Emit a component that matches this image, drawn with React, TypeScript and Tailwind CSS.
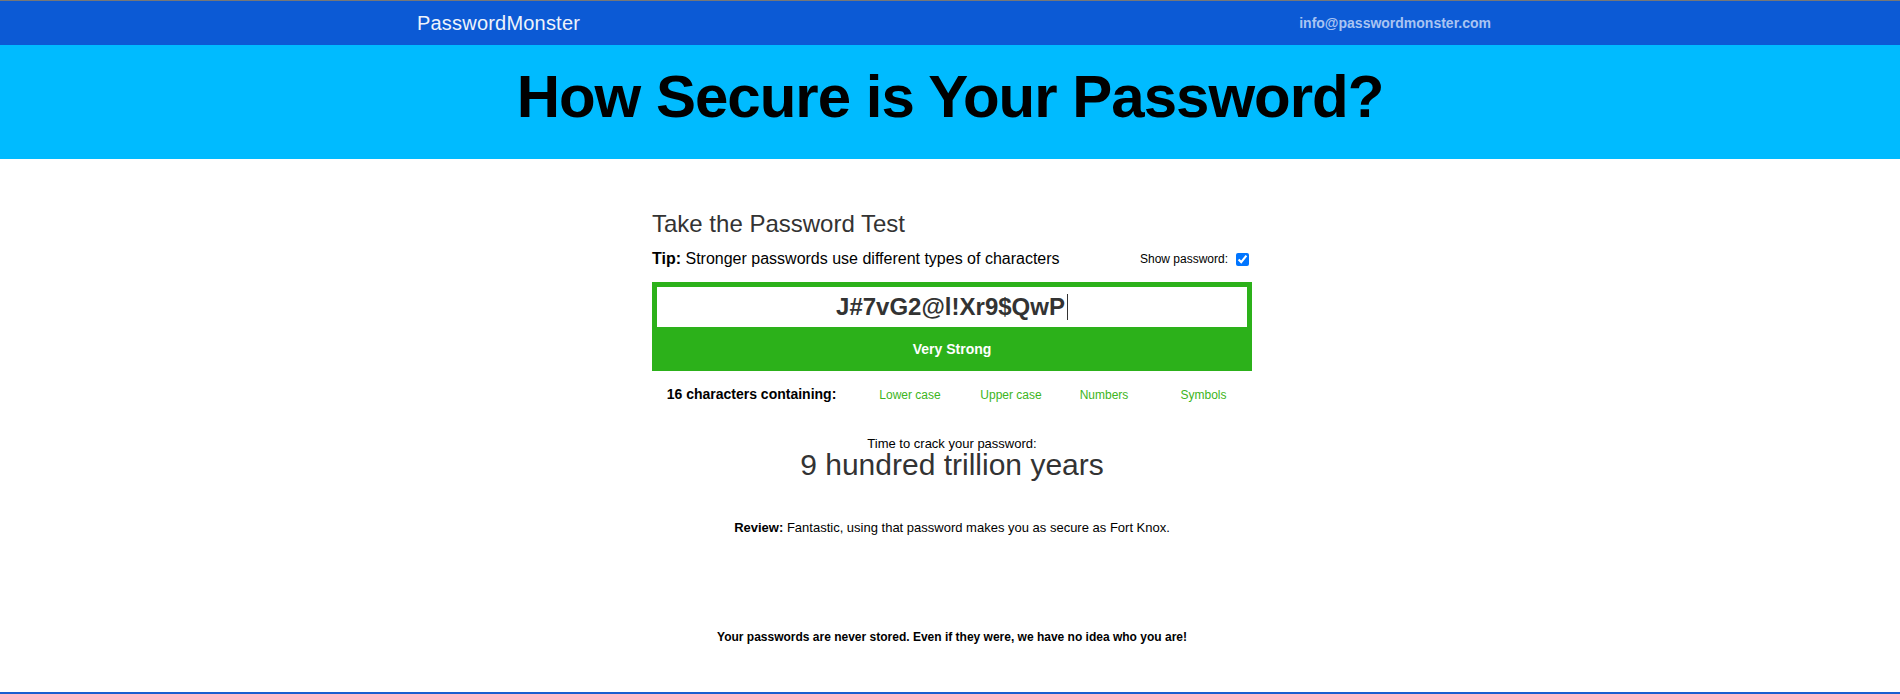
import React from "react";

const features = ["Lower case", "Upper case", "Numbers", "Symbols"];

const Header = () => (
  <header className="border-t border-[#777777] bg-[#0c5ad5]">
    <div className="mx-auto flex h-[44px] w-[1082px] items-center justify-between">
      <span className="ml-[8px] text-[20px] leading-none tracking-[0.2px] text-[#eef3fb]">PasswordMonster</span>
      <a href="#" className="text-[14px] font-bold text-[#a9c4f2]">
        info@passwordmonster.com
      </a>
    </div>
  </header>
);

const PasswordBox = ({ value }: { value: string }) => (
  <div className="mt-[13px] border-[5px] border-b-0 border-[#2cb11a] bg-[#2cb11a]">
    <div className="flex h-[40px] items-center justify-center bg-white">
      <span className="text-[24px] font-bold text-[#333333]">{value}</span>
      <span className="ml-[2px] h-[26px] w-px bg-[#333333]" />
    </div>
    <div className="flex h-[44px] items-center justify-center text-[14px] font-bold text-white">
      Very Strong
    </div>
  </div>
);

export default function App() {
  const password = "J#7vG2@l!Xr9$QwP";

  return (
    <div className="min-h-screen bg-white font-['Liberation_Sans',Arial,sans-serif] text-black">
      <Header />

      <section className="bg-[#00bbff] pt-[22px] pb-[32px] text-center">
        <h1 className="text-[60px] leading-none font-bold tracking-[-1px] text-black">
          How Secure is Your Password?
        </h1>
      </section>

      <main className="flex justify-center pl-[4px] pt-[51px]">
        <div className="w-[600px]">
          <h2 className="text-[24px] leading-[28px] text-[#333333]">Take the Password Test</h2>

          <div className="mt-[11px] flex h-[20px] items-center justify-between">
            <p className="text-[16px] leading-[20px]">
              <b>Tip:</b> Stronger passwords use different types of characters
            </p>
            <label className="flex items-center text-[12px]">
              Show password:
              <input
                type="checkbox"
                checked
                readOnly
                className="mr-[3px] ml-[8px] h-[13px] w-[13px] accent-[#0075ff]"
              />
            </label>
          </div>

          <PasswordBox value={password} />

          <div className="mt-[13px] grid h-[20px] grid-cols-[199px_118px_84px_102px_97px] items-center text-center">
            <span className="text-[14px] font-bold">16 characters containing:</span>
            {features.map((f) => (
              <span key={f} className="text-[12px] text-[#3cb521]">
                {f}
              </span>
            ))}
          </div>

          <div className="mt-[32px] text-center">
            <p className="text-[13px] leading-[15px]">Time to crack your password:</p>
            <p className="text-[30px] leading-[28px] text-[#333333]">9 hundred trillion years</p>
          </div>

          <p className="mt-[41px] text-center text-[13px] leading-[15px]">
            <b>Review:</b> Fantastic, using that password makes you as secure as Fort Knox.
          </p>

          <p className="mt-[95px] text-center text-[12px] leading-[14px] font-bold">
            Your passwords are never stored. Even if they were, we have no idea who you are!
          </p>
        </div>
      </main>

      <footer className="mt-[48px] h-[60px] bg-[#1a5fd0]" />
    </div>
  );
}
